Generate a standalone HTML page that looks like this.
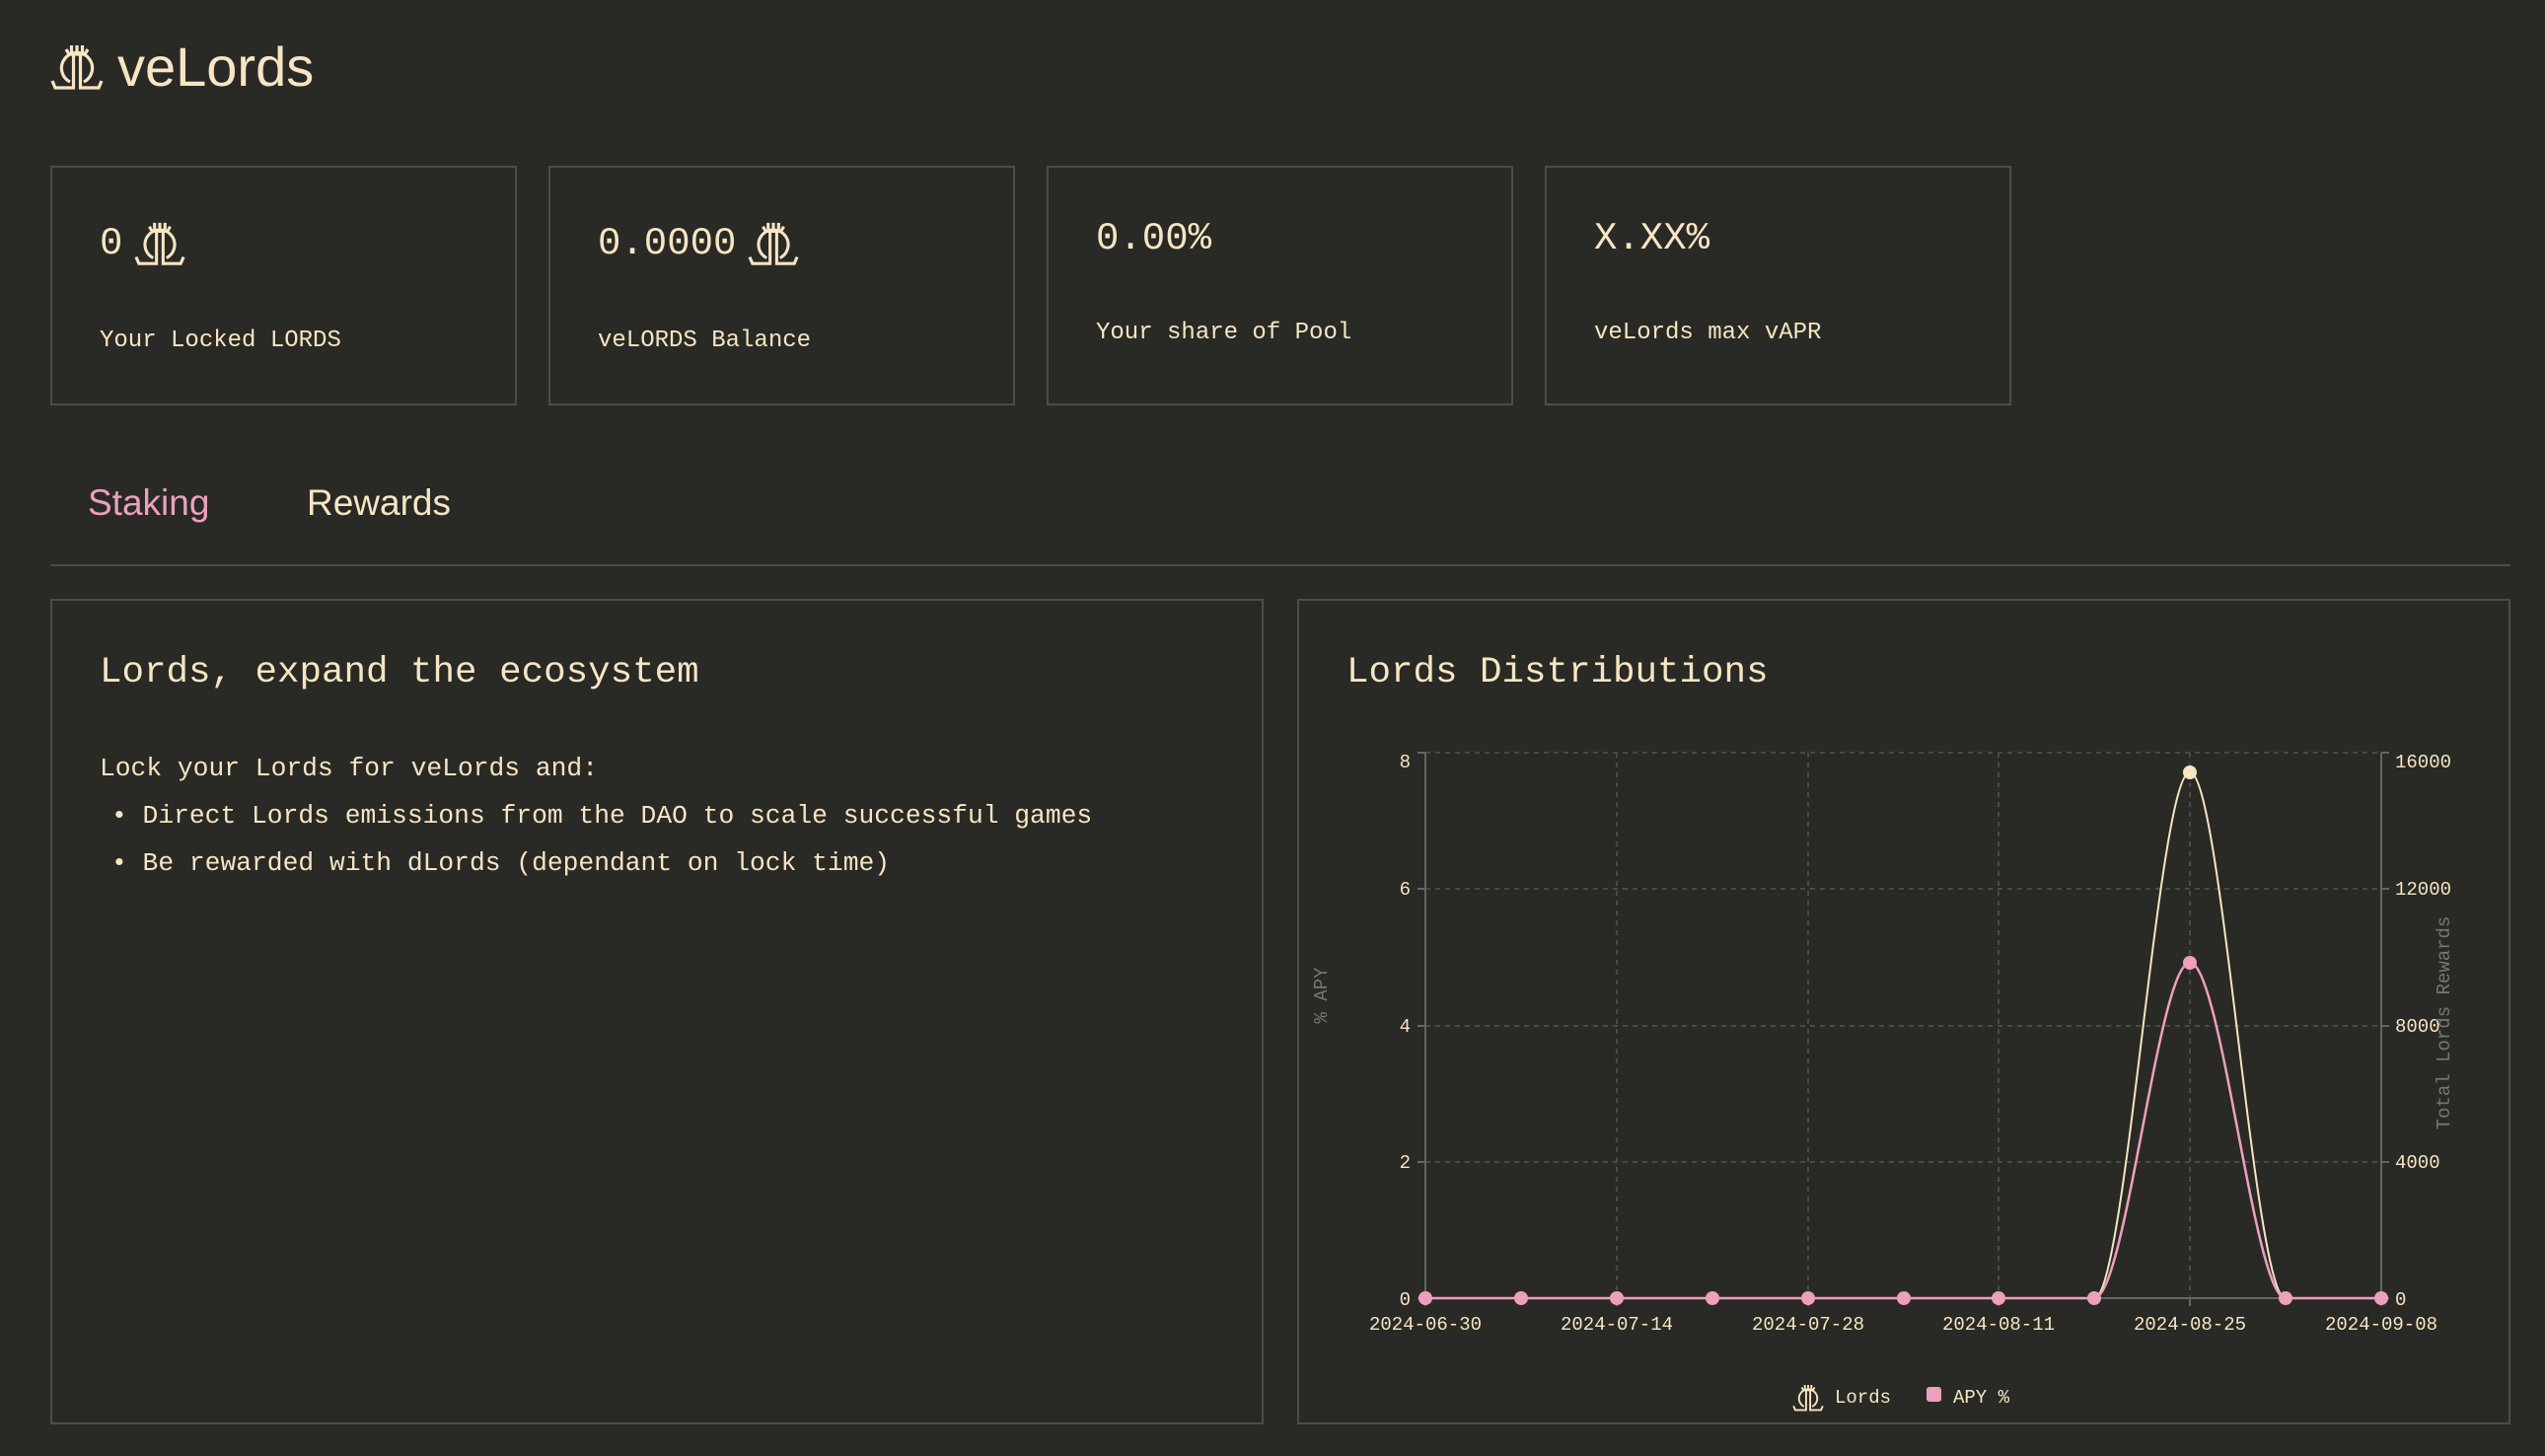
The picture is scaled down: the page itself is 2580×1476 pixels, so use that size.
<!DOCTYPE html>
<html><head><meta charset="utf-8"><style>
*{margin:0;padding:0;box-sizing:border-box}
body{width:2580px;height:1476px;background:#292a25;color:#f7e5c3;font-family:"Liberation Mono",monospace;position:relative;overflow:hidden}
.abs{position:absolute}
.card{position:absolute;top:168px;width:473px;height:243px;border:2px solid #4d4d48;background:#292a25}
.val{position:absolute;left:48px;font-size:39px;white-space:nowrap;display:flex;align-items:center;gap:12px}
.lab{position:absolute;left:48px;font-size:24px;white-space:nowrap}
.panel{position:absolute;top:607px;height:837px;border:2px solid #4d4d48;background:#292a25}
.ptitle{position:absolute;left:48px;top:52px;font-size:37.5px;white-space:nowrap}
.sans{font-family:"Liberation Sans",sans-serif}
</style></head><body>
<svg width="0" height="0" style="position:absolute"><defs>
<symbol id="lg" viewBox="0 0 54 50"><g fill="none" stroke="#f7e5c3" stroke-width="3.2" stroke-linejoin="miter">
<path d="M18 12H36M21.5 3v9M27 3v9M32.5 3v9M16 7l3 5M38 7l-3 5"/>
<path d="M20 40A15.6 15.6 0 1 1 34 40"/>
<path d="M23.5 12V46H5L2 39"/>
<path d="M30.5 12V46H49L52 39"/>
</g></symbol></defs></svg>

<svg class="abs" style="left:51px;top:43px" width="54" height="50"><use href="#lg" width="54" height="50"/></svg>
<div class="abs sans" style="left:119px;top:35px;font-size:56px;color:#f7e5c3">veLords</div>

<div class="card" style="left:51px"><div class="val" style="top:52px">0 <svg width="52" height="50"><use href="#lg" width="52" height="50"/></svg></div><div class="lab" style="top:162px">Your Locked LORDS</div></div>
<div class="card" style="left:556px"><div class="val" style="top:52px">0.0000 <svg width="52" height="50"><use href="#lg" width="52" height="50"/></svg></div><div class="lab" style="top:162px">veLORDS Balance</div></div>
<div class="card" style="left:1061px"><div class="val" style="top:50px">0.00%</div><div class="lab" style="top:154px">Your share of Pool</div></div>
<div class="card" style="left:1566px"><div class="val" style="top:50px">X.XX%</div><div class="lab" style="top:154px">veLords max vAPR</div></div>

<div class="abs sans" style="left:89px;top:489px;font-size:37px;color:#ef9fbe">Staking</div>
<div class="abs sans" style="left:311px;top:489px;font-size:37px;color:#f7e5c3">Rewards</div>
<div class="abs" style="left:51px;top:572px;width:2494px;height:2px;background:#4d4d48"></div>

<div class="panel" style="left:51px;width:1230px">
<div class="ptitle">Lords, expand the ecosystem</div>
<div class="abs" style="left:48px;top:146px;font-size:26.3px;line-height:48px;white-space:nowrap">Lock your Lords for veLords and:<br>
<span style="margin-left:12px">•</span> Direct Lords emissions from the DAO to scale successful games<br>
<span style="margin-left:12px">•</span> Be rewarded with dLords (dependant on lock time)</div>
</div>

<div class="panel" style="left:1315px;width:1230px">
<div class="ptitle">Lords Distributions</div>
</div>

<svg class="abs" style="left:0;top:0" width="2580" height="1476" font-family="Liberation Mono, monospace" font-size="19">
<g stroke="#4a4a45" stroke-width="2" stroke-dasharray="5,5">
<path d="M1445 763H2414M1445 901H2414M1445 1040H2414M1445 1178H2414"/>
<path d="M1639 763V1316M1833 763V1316M2026 763V1316M2220 763V1316"/>
</g>
<g stroke="#66665f" stroke-width="2" fill="none">
<path d="M1445 763V1316H2414V763"/>
<path d="M1437 763h8M1437 901h8M1437 1040h8M1437 1178h8M1437 1316h8M2414 763h8M2414 901h8M2414 1040h8M2414 1178h8M2414 1316h8"/>
<path d="M1445 1316v8M1639 1316v8M1833 1316v8M2026 1316v8M2220 1316v8M2414 1316v8"/>
</g>
<g fill="#f7e5c3" text-anchor="end">
<text x="1430" y="778">8</text><text x="1430" y="907">6</text><text x="1430" y="1046">4</text><text x="1430" y="1184">2</text><text x="1430" y="1323">0</text>
</g>
<g fill="#f7e5c3">
<text x="2428" y="778">16000</text><text x="2428" y="907">12000</text><text x="2428" y="1046">8000</text><text x="2428" y="1184">4000</text><text x="2428" y="1323">0</text>
</g>
<g fill="#f7e5c3" text-anchor="middle">
<text x="1445" y="1348">2024-06-30</text><text x="1639" y="1348">2024-07-14</text><text x="1833" y="1348">2024-07-28</text><text x="2026" y="1348">2024-08-11</text><text x="2220" y="1348">2024-08-25</text><text x="2414" y="1348">2024-09-08</text>
</g>
<text transform="translate(1345 1009) rotate(-90)" fill="#77776f" text-anchor="middle" font-size="19">% APY</text>
<text transform="translate(2483 1037) rotate(-90)" fill="#77776f" text-anchor="middle" font-size="19">Total Lords Rewards</text>
<path d="M1445 1316H2123C2155 1316 2188 783 2220 783C2252 783 2285 1316 2317 1316H2414" fill="none" stroke="#f7e5c3" stroke-width="2"/>
<path d="M1445 1316H2123C2155 1316 2188 976 2220 976C2252 976 2285 1316 2317 1316H2414" fill="none" stroke="#ef9fbe" stroke-width="2.5"/>
<circle cx="2220" cy="783" r="7" fill="#f7e5c3"/>
<g fill="#ef9fbe">
<circle cx="1445" cy="1316" r="7"/><circle cx="1542" cy="1316" r="7"/><circle cx="1639" cy="1316" r="7"/><circle cx="1736" cy="1316" r="7"/><circle cx="1833" cy="1316" r="7"/><circle cx="1930" cy="1316" r="7"/><circle cx="2026" cy="1316" r="7"/><circle cx="2123" cy="1316" r="7"/><circle cx="2220" cy="976" r="7"/><circle cx="2317" cy="1316" r="7"/><circle cx="2414" cy="1316" r="7"/>
</g>
<use href="#lg" x="1817" y="1402" width="32" height="30"/>
<text x="1860" y="1422" fill="#f7e5c3">Lords</text>
<rect x="1953" y="1406" width="15" height="15" rx="3" fill="#ef9fbe"/>
<text x="1980" y="1422" fill="#f7e5c3">APY %</text>
</svg>
</body></html>
